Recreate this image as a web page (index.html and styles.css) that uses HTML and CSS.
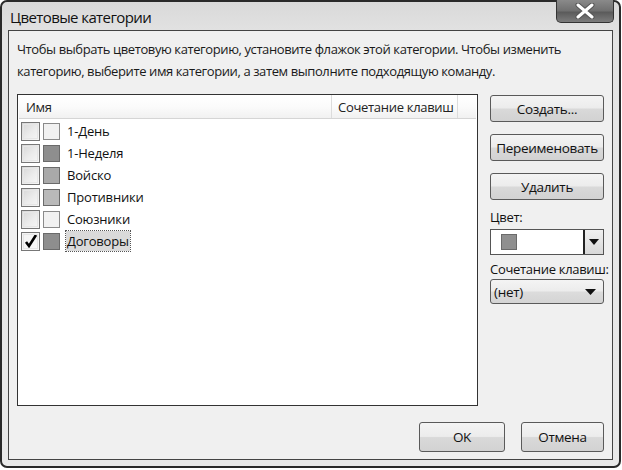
FILE: index.html
```html
<!DOCTYPE html>
<html lang="ru">
<head>
    <meta charset="UTF-8">
    <title>Цветовые категории</title>
    <link rel="stylesheet" href="styles.css">
</head>
<body>
    <div class="window">
        <div class="titlebar">
            <span class="title">Цветовые категории</span>
            <div class="close-btn">
                <svg width="22" height="16" viewBox="0 0 22 16">
                    <path d="M4 2 L18 14 M18 2 L4 14" stroke="#555" stroke-width="5" stroke-linecap="round"/>
                    <path d="M4 2 L18 14 M18 2 L4 14" stroke="#fff" stroke-width="3" stroke-linecap="round"/>
                </svg>
            </div>
        </div>

        <div class="panel">
            <p class="intro">Чтобы выбрать цветовую категорию, установите флажок этой категории. Чтобы изменить категорию, выберите имя категории, а затем выполните подходящую команду.</p>

            <div class="main">
                <div class="listbox">
                    <div class="list-head">
                        <div class="col-name">Имя</div>
                        <div class="col-keys">Сочетание клавиш</div>
                        <div class="col-rest"></div>
                    </div>
                    <div class="row">
                        <span class="check"></span>
                        <span class="swatch light"></span>
                        <span class="label">1-День</span>
                    </div>
                    <div class="row">
                        <span class="check"></span>
                        <span class="swatch dark"></span>
                        <span class="label">1-Неделя</span>
                    </div>
                    <div class="row">
                        <span class="check"></span>
                        <span class="swatch mid"></span>
                        <span class="label">Войско</span>
                    </div>
                    <div class="row">
                        <span class="check"></span>
                        <span class="swatch pale"></span>
                        <span class="label">Противники</span>
                    </div>
                    <div class="row">
                        <span class="check"></span>
                        <span class="swatch light"></span>
                        <span class="label">Союзники</span>
                    </div>
                    <div class="row">
                        <span class="check checked">
                            <svg width="14" height="14" viewBox="0 0 14 14">
                                <path d="M2 8 L5 12 L12 1" fill="none" stroke="#000" stroke-width="2.6"/>
                            </svg>
                        </span>
                        <span class="swatch dark"></span>
                        <span class="label selected">Договоры</span>
                    </div>
                </div>

                <div class="side">
                    <button class="btn">Создать...</button>
                    <button class="btn">Переименовать</button>
                    <button class="btn">Удалить</button>
                    <div class="field-label">Цвет:</div>
                    <div class="color-select">
                        <span class="swatch dark"></span>
                        <span class="drop-btn">
                            <svg width="10" height="6" viewBox="0 0 10 6"><path d="M0 0 H10 L5 6 Z" fill="#111"/></svg>
                        </span>
                    </div>
                    <div class="field-label keys-label">Сочетание клавиш:</div>
                    <div class="combo">
                        <span>(нет)</span>
                        <svg width="11" height="6" viewBox="0 0 11 6"><path d="M0 0 H11 L5.5 6 Z" fill="#111"/></svg>
                    </div>
                </div>
            </div>

            <div class="footer">
                <button class="btn btn-ok">OK</button>
                <button class="btn btn-cancel">Отмена</button>
            </div>
        </div>
    </div>
</body>
</html>
```

FILE: styles.css
```css
/* Reset */
* {
    margin: 0;
    padding: 0;
    box-sizing: border-box;
}

body {
    font-family: 'Open Sans', 'Noto Sans', sans-serif;
    background-color: #fff;
    color: #111;
    width: 622px;
    height: 470px;
    overflow: hidden;
}

/* Outer window frame */
.window {
    width: 621px;
    height: 468px;
    border: 2px solid #2a2a2a;
    border-radius: 7px;
    background: linear-gradient(180deg, #d9d9d9 0%, #e4e4e4 8%, #e9e9e9 100%);
    padding: 0 6px 6px 6px;
    display: flex;
    flex-direction: column;
}

/* Title bar */
.titlebar {
    height: 33px;
    display: flex;
    justify-content: space-between;
    align-items: flex-start;
}

.title {
    font-size: 15px;
    letter-spacing: -0.6px;
    color: #111;
    margin-top: 5px;
    margin-left: 2px;
}

.close-btn {
    width: 58px;
    height: 23px;
    margin-right: -1px;
    margin-top: -2px;
    border: 1px solid #333;
    border-top: none;
    border-radius: 0 0 5px 5px;
    background: linear-gradient(180deg, #8a8a8a 0%, #6f6f6f 50%, #5a5a5a 55%, #7c7c7c 100%);
    display: flex;
    align-items: center;
    justify-content: center;
}

/* Inner content panel */
.panel {
    flex: 1;
    border: 1px solid #444;
    background-color: #f0f0f0;
    padding: 7px 8px 7px 8px;
    display: flex;
    flex-direction: column;
}

.intro {
    font-size: 13px;
    letter-spacing: -0.4px;
    line-height: 22px;
    color: #1a1a1a;
    margin-bottom: 12px;
}

.main {
    display: flex;
    gap: 12px;
}

/* List of categories */
.listbox {
    width: 463px;
    height: 312px;
    border: 1px solid #333;
    background-color: #fff;
    padding: 0 1px;
}

.list-head {
    display: flex;
    height: 24px;
    background: linear-gradient(180deg, #ffffff 0%, #fbfbfb 50%, #f1f1f1 100%);
    border-bottom: 1px solid #d5d5d5;
    font-size: 13px;
    letter-spacing: -0.3px;
    color: #222;
    margin-bottom: 1px;
}

.col-name {
    width: 313px;
    padding: 3px 0 0 7px;
    border-right: 1px solid #dcdcdc;
}

.col-keys {
    width: 126px;
    padding: 3px 0 0 6px;
    border-right: 1px solid #dcdcdc;
}

.col-rest {
    flex: 1;
}

.row {
    height: 22px;
    display: flex;
    align-items: center;
    padding-left: 2px;
}

.check {
    width: 19px;
    height: 19px;
    border: 1px solid #777;
    outline: 1px solid #e6e6e6;
    outline-offset: -3px;
    background: linear-gradient(135deg, #d6d6d6 0%, #ececec 55%, #f7f7f7 100%);
    display: flex;
    align-items: center;
    justify-content: center;
}

.check.checked {
    background: linear-gradient(135deg, #f2f2f2 0%, #fafafa 100%);
}

.swatch {
    width: 17px;
    height: 17px;
    border: 1px solid #6a6a6a;
    margin-left: 3px;
}

.swatch.light {
    background-color: #f1f1f1;
    border-color: #8a8a8a;
}

.swatch.dark {
    background-color: #8e8e8e;
}

.swatch.mid {
    background-color: #a9a9a9;
}

.swatch.pale {
    background-color: #b9b9b9;
}

.label {
    font-size: 13px;
    letter-spacing: -0.2px;
    margin-left: 6px;
    color: #111;
    padding: 1px 1px;
}

.label.selected {
    background-color: #dadada;
    outline: 1px dotted #555;
}

/* Right column */
.side {
    width: 114px;
    display: flex;
    flex-direction: column;
    padding-top: 1px;
}

.btn {
    font-family: 'Open Sans', 'Noto Sans', sans-serif;
    font-size: 13.5px;
    letter-spacing: -0.3px;
    color: #111;
    height: 27px;
    border: 1px solid #5a5a5a;
    border-radius: 3px;
    background: linear-gradient(180deg, #f4f4f4 0%, #ececec 48%, #d9d9d9 52%, #d2d2d2 100%);
    margin-bottom: 12px;
}

.field-label {
    font-size: 13px;
    letter-spacing: -0.3px;
    white-space: nowrap;
    color: #111;
    margin-top: -4px;
    margin-bottom: 3px;
}

.keys-label {
    margin-top: 0;
    margin-bottom: 1px;
}

.color-select {
    height: 26px;
    border: 1px solid #555;
    background-color: #fff;
    display: flex;
    align-items: center;
    justify-content: space-between;
    margin-bottom: 5px;
}

.color-select .swatch {
    width: 16px;
    height: 16px;
    margin-left: 10px;
    background-color: #8f8f8f;
}

.drop-btn {
    width: 20px;
    height: 24px;
    border-left: 2px solid #222;
    background: linear-gradient(180deg, #f0f0f0, #d8d8d8);
    display: flex;
    align-items: center;
    justify-content: center;
}

.combo {
    height: 25px;
    border: 1px solid #5a5a5a;
    border-radius: 3px;
    background: linear-gradient(180deg, #f4f4f4 0%, #ececec 48%, #dcdcdc 52%, #d4d4d4 100%);
    display: flex;
    align-items: center;
    justify-content: space-between;
    padding: 0 7px 0 3px;
    font-size: 13.5px;
    letter-spacing: -0.3px;
}

/* Bottom buttons */
.footer {
    display: flex;
    justify-content: flex-end;
    gap: 16px;
    margin-top: 16px;
}

.btn-ok,
.btn-cancel {
    height: 30px;
    margin-bottom: 0;
}

.btn-ok {
    width: 86px;
}

.btn-cancel {
    width: 83px;
}
```
